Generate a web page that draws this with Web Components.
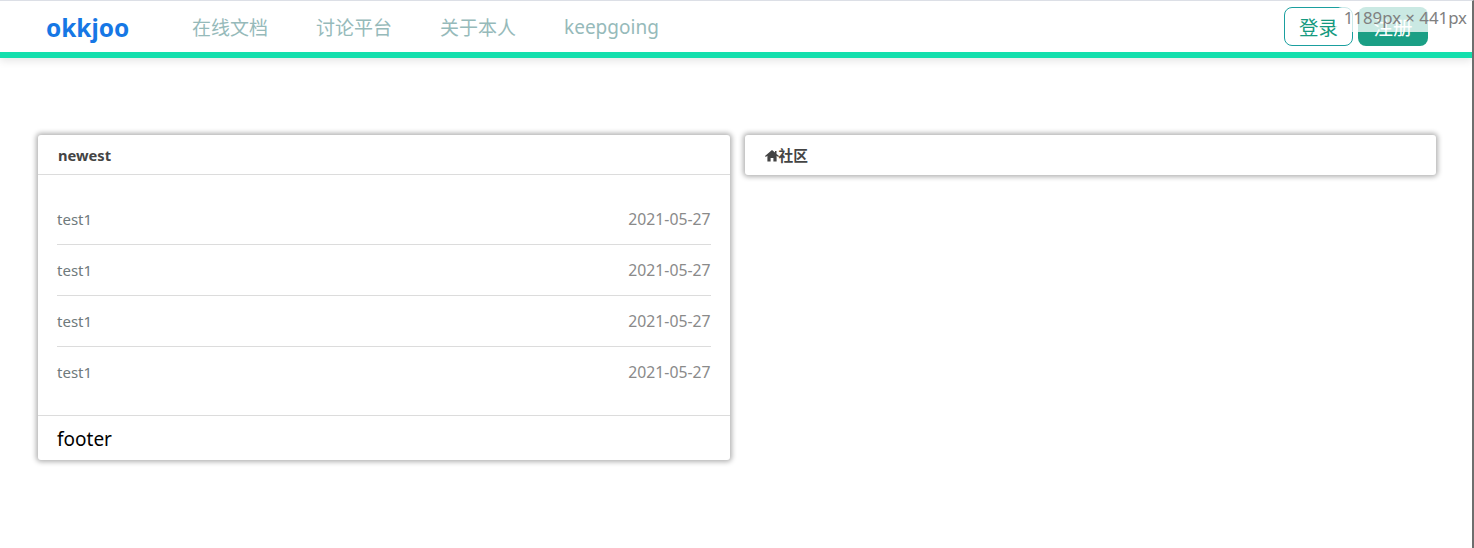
<!DOCTYPE html>
<html lang="zh">
<head>
<meta charset="utf-8">
<title>okkjoo</title>
<style>
  html, body {
    margin: 0;
    height: 100%;
    background: #fff;
    overflow: hidden;
    font-family: "Noto Sans", "Noto Sans CJK SC", sans-serif;
  }
  body {
    box-sizing: border-box;
    height: 548px;
    border-top: 1px solid #dcdfe6;
    border-right: 2px solid #6e6e6e;
  }
</style>
</head>
<body>
<app-header>
  <nav-link slot="links">在线文档</nav-link>
  <nav-link slot="links">讨论平台</nav-link>
  <nav-link slot="links">关于本人</nav-link>
  <nav-link slot="links">keepgoing</nav-link>
</app-header>
<app-main>
  <info-card heading="newest" footer>
    <topic-row title-text="test1" date="2021-05-27"></topic-row>
    <topic-row title-text="test1" date="2021-05-27"></topic-row>
    <topic-row title-text="test1" date="2021-05-27"></topic-row>
    <topic-row title-text="test1" date="2021-05-27"></topic-row>
    <span slot="footer">footer</span>
  </info-card>
  <info-card heading="社区" icon></info-card>
</app-main>
<size-tip>1189px × 441px</size-tip>

<script>
const headerTemplate = document.createElement('template')
headerTemplate.innerHTML = `
  <style>
    :host {
      display: flex;
      align-items: center;
      box-sizing: border-box;
      height: 57px;
      padding: 0 44px 0 46px;
      background: #fff;
      border-bottom: 6px solid #13dfad;
      box-shadow: 0 3px 8px rgba(0, 0, 0, .1);
    }
    .logo {
      width: 146px;
      padding-top: 1px;
      font-size: 24.4px;
      font-weight: 700;
      color: #1677e5;
    }
    .links {
      display: flex;
      gap: 48px;
      padding-top: 1px;
    }
    .actions {
      display: flex;
      gap: 5px;
      margin-left: auto;
    }
    button {
      box-sizing: border-box;
      width: 69px;
      height: 39px;
      padding: 0;
      border-radius: 8px;
      font: inherit;
      font-size: 19.5px;
      cursor: pointer;
    }
    .login {
      background: #fff;
      border: 1px solid #1a9f9f;
      color: #159a80;
    }
    .register {
      width: 70px;
      background: #1a9f85;
      border: none;
      color: #fff;
    }
  </style>
  <div class="logo">okkjoo</div>
  <div class="links"><slot name="links"></slot></div>
  <div class="actions">
    <button class="login">登录</button>
    <button class="register">注册</button>
  </div>
`

customElements.define('app-header',
  class extends HTMLElement {
    constructor () {
      super()
      this.attachShadow({ mode: 'open' })
      this.shadowRoot.appendChild(headerTemplate.content.cloneNode(true))
    }
  })

const navLinkTemplate = document.createElement('template')
navLinkTemplate.innerHTML = `
  <style>
    :host {
      display: block;
      font-size: 19px;
      color: #96baba;
      cursor: pointer;
    }
    :host(:last-child) {
      padding-top: 1px;
    }
  </style>
  <slot></slot>
`

customElements.define('nav-link',
  class extends HTMLElement {
    constructor () {
      super()
      this.attachShadow({ mode: 'open' })
      this.shadowRoot.appendChild(navLinkTemplate.content.cloneNode(true))
    }
  })

const mainTemplate = document.createElement('template')
mainTemplate.innerHTML = `
  <style>
    :host {
      display: flex;
      align-items: flex-start;
      gap: 15px;
      padding: 77px 36px 0 38px;
    }
  </style>
  <slot></slot>
`

customElements.define('app-main',
  class extends HTMLElement {
    constructor () {
      super()
      this.attachShadow({ mode: 'open' })
      this.shadowRoot.appendChild(mainTemplate.content.cloneNode(true))
    }
  })

const cardTemplate = document.createElement('template')
cardTemplate.innerHTML = `
  <style>
    :host {
      display: block;
      flex: 1 1 0;
      box-sizing: border-box;
      background: #fff;
      border-radius: 3px;
      box-shadow: 0 0 5px 2px rgba(0, 0, 0, .3);
      color: #444;
    }
    .head {
      display: flex;
      align-items: center;
      box-sizing: border-box;
      height: 40px;
      padding: 0 20px;
      font-size: 14.7px;
      font-weight: 700;
      color: #444;
    }
    :host([icon]) .head {
      padding-bottom: 2px;
    }
    svg {
      width: 14px;
      height: 12px;
      margin-top: 3px;
      flex: none;
    }
    .body {
      margin-top: -1px;
      padding: 19px 19px 17px;
      border-top: 1px solid #dcdcdc;
    }
    .foot {
      box-sizing: border-box;
      height: 45px;
      padding: 11px 19px 0;
      border-top: 1px solid #dcdcdc;
      font-size: 19px;
      line-height: 25px;
      color: #000;
    }
    [hidden] {
      display: none;
    }
  </style>
  <div class="head">
    <svg viewBox="0 0 14 12" hidden><path fill="#444" d="M7 0 0 6l.8 1.100 1.600-1.300V11.500h3.200V8h2.800v3.500h3.200V5.800l1.600 1.300L14 6l-2.500-2.100V1H10v1.600z"/></svg>
    <span class="heading"></span>
  </div>
  <div class="body" hidden><slot></slot></div>
  <div class="foot" hidden><slot name="footer"></slot></div>
`

customElements.define('info-card',
  class extends HTMLElement {
    constructor () {
      super()
      this.attachShadow({ mode: 'open' })
      this.shadowRoot.appendChild(cardTemplate.content.cloneNode(true))
    }

    connectedCallback () {
      this.shadowRoot.querySelector('.heading').textContent = this.getAttribute('heading')
      this.shadowRoot.querySelector('svg').toggleAttribute('hidden', !this.hasAttribute('icon'))
      // only the card with a footer also has a list
      this.shadowRoot.querySelector('.body').toggleAttribute('hidden', !this.hasAttribute('footer'))
      this.shadowRoot.querySelector('.foot').toggleAttribute('hidden', !this.hasAttribute('footer'))
    }
  })

const rowTemplate = document.createElement('template')
rowTemplate.innerHTML = `
  <style>
    :host {
      display: flex;
      justify-content: space-between;
      align-items: center;
      box-sizing: border-box;
      height: 51px;
      border-bottom: 1px solid #dcdcdc;
      font-size: 15px;
    }
    :host(:last-of-type) {
      border-bottom-color: transparent;
    }
    .title {
      color: #6f7a7c;
    }
    .date {
      font-size: 15.75px;
      color: #8a8a8a;
    }
  </style>
  <span class="title"></span>
  <span class="date"></span>
`

customElements.define('topic-row',
  class extends HTMLElement {
    constructor () {
      super()
      this.attachShadow({ mode: 'open' })
      this.shadowRoot.appendChild(rowTemplate.content.cloneNode(true))
    }

    connectedCallback () {
      this.shadowRoot.querySelector('.title').textContent = this.getAttribute('title-text')
      this.shadowRoot.querySelector('.date').textContent = this.getAttribute('date')
    }
  })

const tipTemplate = document.createElement('template')
tipTemplate.innerHTML = `
  <style>
    :host {
      position: absolute;
      top: 7px;
      right: 7px;
      box-sizing: border-box;
      height: 25px;
      padding: 0 0 0 9px;
      border-radius: 7px;
      background: rgba(255, 255, 255, .77);
      font-size: 16.8px;
      line-height: 21px;
      color: #808080;
      white-space: nowrap;
    }
  </style>
  <slot></slot>
`

customElements.define('size-tip',
  class extends HTMLElement {
    constructor () {
      super()
      this.attachShadow({ mode: 'open' })
      this.shadowRoot.appendChild(tipTemplate.content.cloneNode(true))
    }
  })
</script>
</body>
</html>
